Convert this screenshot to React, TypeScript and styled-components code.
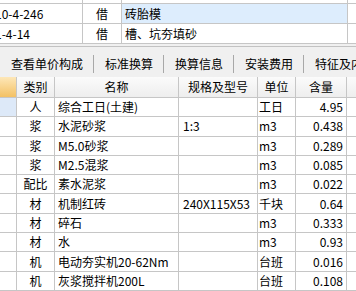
import React from "react";
import styled, { createGlobalStyle } from "styled-components";

interface QuotaItem {
    type: string;
    name: string;
    spec: string;
    unit: string;
    amount: string;
    current?: boolean;
}

const items: QuotaItem[] = [
    { type: "人", name: "综合工日(土建)", spec: "", unit: "工日", amount: "4.95", current: true },
    { type: "浆", name: "水泥砂浆", spec: "1:3", unit: "m3", amount: "0.438" },
    { type: "浆", name: "M5.0砂浆", spec: "", unit: "m3", amount: "0.289" },
    { type: "浆", name: "M2.5混浆", spec: "", unit: "m3", amount: "0.085" },
    { type: "配比", name: "素水泥浆", spec: "", unit: "m3", amount: "0.022" },
    { type: "材", name: "机制红砖", spec: "240X115X53", unit: "千块", amount: "0.64" },
    { type: "材", name: "碎石", spec: "", unit: "m3", amount: "0.333" },
    { type: "材", name: "水", spec: "", unit: "m3", amount: "0.93" },
    { type: "机", name: "电动夯实机20-62Nm", spec: "", unit: "台班", amount: "0.016" },
    { type: "机", name: "灰浆搅拌机200L", spec: "", unit: "台班", amount: "0.108" },
];

const tabs = ["查看单价构成", "标准换算", "换算信息", "安装费用", "特征及内容"];

const GlobalStyle = createGlobalStyle`
    html, body {
        margin: 0;
        padding: 0;
        overflow: hidden;
    }
    body {
        font-family: "Noto Sans CJK SC", "Liberation Sans", sans-serif;
        font-size: 12px;
        color: #000;
    }
`;

const Page = styled.div`
    width: 356px;
    height: 291px;
    overflow: hidden;
    background-color: #f0f0f0;
    display: flex;
    flex-direction: column;
`;

// upper grid, scrolled so only the last two rows show
const BillGrid = styled.div`
    height: 44px;
    flex-shrink: 0;
    overflow: hidden;
    display: flex;
    flex-direction: column;
    justify-content: flex-end;
    background-color: #fff;
`;

const BillRow = styled.div`
    display: grid;
    grid-template-columns: 83px 39px 226px 1fr;
    height: 20px;
    flex-shrink: 0;
`;

const BillCell = styled.div<{ $align?: "left" | "center"; $active?: boolean }>`
    display: flex;
    align-items: center;
    justify-content: ${p => (p.$align === "center" ? "center" : "flex-start")};
    padding-left: ${p => (p.$align === "center" ? 0 : 3)}px;
    border-right: 1px solid #c6c6c6;
    border-bottom: 1px solid #c6c6c6;
    background-color: ${p => (p.$active ? "#ddedfd" : "#fff")};
    white-space: nowrap;
    overflow: hidden;
    line-height: 19px;

    &:last-child {
        border-right: none;
    }
`;

// the code column is scrolled a little to the left
const Code = styled.span`
    margin-left: -8px;
`;

const Toolbar = styled.div`
    display: flex;
    align-items: center;
    margin-top: 2px;
    padding: 7px 0 3px;
    border-top: 1px solid #c2c2c2;
    background-color: #f0f0f0;
    white-space: nowrap;
    flex-shrink: 0;
`;

const Tab = styled.div`
    height: 20px;
    line-height: 20px;
    padding: 0 10px 0 11px;
    flex-shrink: 0;
    cursor: pointer;
`;

const TabDivider = styled.div`
    width: 1px;
    height: 18px;
    background-color: #a8a8a8;
    flex-shrink: 0;
`;

const Table = styled.div`
    display: flex;
    flex-direction: column;
    flex: 1;
    background-color: #fff;
`;

const TableRow = styled.div<{ $head?: boolean }>`
    display: grid;
    grid-template-columns: 17px 38px 124px 79px 38px 51px 1fr;
    height: ${p => (p.$head ? "21px" : "19.3px")};
    flex-shrink: 0;
    background: ${p => (p.$head ? "linear-gradient(#fbfbfb, #ededed)" : "#fff")};
`;

const Cell = styled.div<{ $align?: "left" | "center" | "right"; $pad?: number }>`
    display: flex;
    align-items: center;
    justify-content: ${p =>
        p.$align === "center" ? "center" : p.$align === "right" ? "flex-end" : "flex-start"};
    padding: 0 ${p => (p.$align === "right" ? 3 : 0)}px 0 ${p => p.$pad ?? 0}px;
    border-right: 1px solid #c6c6c6;
    border-bottom: 1px solid #c6c6c6;
    white-space: nowrap;
    overflow: hidden;
    line-height: 16px;

    &:last-child {
        border-right: none;
    }
`;

const RowMarker = styled(Cell)<{ $current?: boolean }>`
    background-color: ${p => (p.$current ? "#dde9f8" : "#fff")};
`;

const Corner = styled(Cell)`
    background: linear-gradient(#fde7b8, #f3c164);
`;

export default function App() {
    return (
        <>
            <GlobalStyle />
            <Page>
                <BillGrid>
                    <BillRow>
                        <BillCell />
                        <BillCell />
                        <BillCell />
                        <BillCell />
                    </BillRow>
                    <BillRow>
                        <BillCell><Code>10-4-246</Code></BillCell>
                        <BillCell $align="center">借</BillCell>
                        <BillCell $active>砖胎模</BillCell>
                        <BillCell />
                    </BillRow>
                    <BillRow>
                        <BillCell><Code>1-4-14</Code></BillCell>
                        <BillCell $align="center">借</BillCell>
                        <BillCell>槽、坑夯填砂</BillCell>
                        <BillCell />
                    </BillRow>
                </BillGrid>

                <Toolbar>
                    {tabs.map((t, i) => (
                        <React.Fragment key={t}>
                            {i > 0 && <TabDivider />}
                            <Tab>{t}</Tab>
                        </React.Fragment>
                    ))}
                </Toolbar>

                <Table>
                    <TableRow $head>
                        <Corner />
                        <Cell $align="center">类别</Cell>
                        <Cell $align="center">名称</Cell>
                        <Cell $align="center">规格及型号</Cell>
                        <Cell $align="center">单位</Cell>
                        <Cell $align="center">含量</Cell>
                        <Cell />
                    </TableRow>
                    {items.map((it, i) => (
                        <TableRow key={i}>
                            <RowMarker $current={it.current} />
                            <Cell $align="center">{it.type}</Cell>
                            <Cell $pad={3}>{it.name}</Cell>
                            <Cell $pad={4}>{it.spec}</Cell>
                            <Cell $pad={1}>{it.unit}</Cell>
                            <Cell $align="right">{it.amount}</Cell>
                            <Cell />
                        </TableRow>
                    ))}
                </Table>
            </Page>
        </>
    );
}
